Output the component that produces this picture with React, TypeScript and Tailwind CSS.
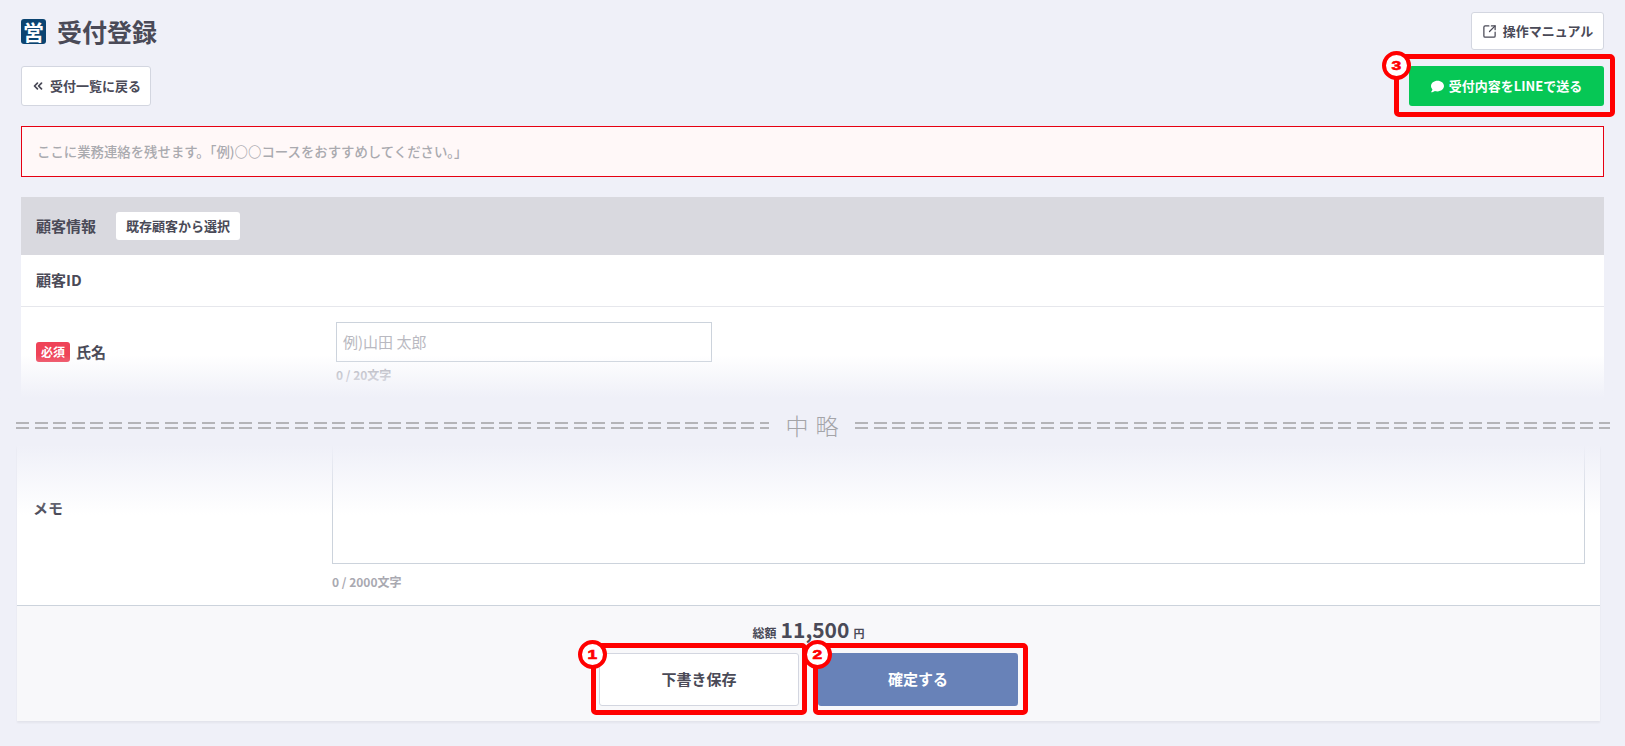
import { ReactNode } from 'react'
import { ChevronsLeft, SquareArrowOutUpRight } from 'lucide-react'
import { FaComment } from 'react-icons/fa'

const dashes = (count: number) =>
  Array.from({ length: count }, (_, i) => (
    <span key={i} className="h-[7px] w-[13px] shrink-0 border-y-2 border-[#b4b4b8]" />
  ))

const Callout = ({
  n,
  boxClass,
  badgeClass,
  children,
}: {
  n: string
  boxClass: string
  badgeClass: string
  children: ReactNode
}) => (
  <div className="relative">
    {children}
    <div className={`pointer-events-none absolute rounded-[5px] border-[5px] border-[#ff0000] ${boxClass}`} />
    <div
      className={`absolute flex h-[29px] w-[29px] items-center justify-center rounded-full border-[4px] border-[#ff0000] bg-white font-['Liberation_Sans',sans-serif] text-[12px] font-bold leading-none text-[#ff0000] ${badgeClass}`}
    >
      <span className="scale-x-[1.45] [-webkit-text-stroke:0.6px_#ff0000]">{n}</span>
    </div>
  </div>
)

export default function App() {
  return (
    <div className="h-[746px] overflow-hidden bg-[#eff0f8] font-['Noto_Sans_CJK_JP',sans-serif] text-[#4a4a57]">
      <div className="relative h-[405px] overflow-hidden px-[21px] pt-3">
        <div className="flex h-[38px] items-center justify-between">
          <div className="flex items-center gap-[11px]">
            <div className="flex h-[25px] w-[25px] items-center justify-center rounded-[3px] bg-[#0b4471] text-[21px] font-bold leading-none text-white">
              営
            </div>
            <h1 className="text-[25px] font-bold leading-none">受付登録</h1>
          </div>
          <button className="flex h-[38px] w-[133px] items-center justify-center gap-[6px] rounded-[3px] border border-[#d3d6e0] bg-white text-[13px] font-bold">
            <SquareArrowOutUpRight size={15} strokeWidth={2} />
            操作マニュアル
          </button>
        </div>

        <div className="mt-4 flex h-10 items-center justify-between">
          <button className="flex h-10 w-[130px] items-center justify-center gap-[5px] rounded-[3px] border border-[#d3d6e0] bg-white text-[13px] font-bold">
            <ChevronsLeft size={14} strokeWidth={3} />
            受付一覧に戻る
          </button>
          <Callout
            n="3"
            boxClass="-left-[15px] -right-[11px] -top-[12px] -bottom-[11px]"
            badgeClass="-left-[27px] -top-[15px]"
          >
            <button className="flex h-10 w-[195px] items-center justify-center gap-[5px] rounded-[3px] bg-[#06c755] text-[13px] font-bold text-white">
              <FaComment size={13} />
              受付内容をLINEで送る
            </button>
          </Callout>
        </div>

        <div className="mt-5 flex h-[51px] items-center border border-[#e60012] bg-[#fff8f8] px-[15px] text-[13.4px] font-medium text-[#aaaaaf]">
          <span>
            ここに業務連絡を残せます。｢例)<span className="font-light">〇〇</span>コースをおすすめしてください。｣
          </span>
        </div>

        <section className="mt-5 bg-white">
          <div className="flex h-[58px] items-center gap-5 bg-[#d9d9df] px-[15px]">
            <h2 className="text-[15px] font-bold">顧客情報</h2>
            <button className="flex h-7 items-center rounded-[3px] bg-white px-[10px] text-[13px] font-bold">
              既存顧客から選択
            </button>
          </div>
          <div className="flex h-[52px] items-center border-b border-[#e6e7ec] px-[15px] text-[15px] font-bold">
            顧客ID
          </div>
          <div className="grid grid-cols-[300px_1fr] px-[15px] pt-[15px]">
            <div className="flex h-[60px] items-center gap-[6px] text-[15px] font-bold">
              <span className="flex h-5 w-[34px] items-center justify-center rounded-[3px] bg-[#ef4358] text-[12px] font-bold leading-none text-white">
                必須
              </span>
              氏名
            </div>
            <div>
              <div className="flex h-10 w-[376px] items-center border border-[#ccd3dc] px-[6px] text-[15px] font-normal text-[#b9b9c1]">
                例)山田 太郎
              </div>
              <p className="mt-[5px] text-[12px] font-bold leading-4 text-[#a9a9b1]">0 / 20文字</p>
            </div>
          </div>
          <div className="h-[60px]" />
        </section>
        <div className="pointer-events-none absolute inset-x-0 bottom-0 h-[50px] bg-gradient-to-b from-[#eff0f800] to-[#eff0f8] to-85%" />
      </div>

      <div className="flex h-10 items-center justify-between overflow-hidden pl-4 pr-[15px]">
        <div className="flex w-[753px] gap-[5.6px] overflow-hidden">{dashes(41)}</div>
        <div className="flex gap-[7px] text-[23px] font-light leading-none text-[#a4a4a8]">
          <span>中</span>
          <span>略</span>
        </div>
        <div className="flex w-[755px] gap-[5.6px] overflow-hidden">{dashes(41)}</div>
      </div>

      <section className="relative ml-[17px] w-[1583px] bg-white shadow-[0_2px_2px_rgba(0,0,0,0.05)]">
        <div className="grid h-[160px] grid-cols-[299px_1fr] pl-4 pr-[15px]">
          <div className="flex h-[126px] items-center text-[15px] font-bold">メモ</div>
          <div>
            <div className="h-[119px] border border-t-0 border-[#ccd3dc]" />
            <p className="mt-[10px] text-[12px] font-bold leading-4 text-[#a9a9b1]">0 / 2000文字</p>
          </div>
        </div>
        <div className="flex h-[116px] flex-col items-center border-t border-[#ccd3dc] bg-[#f8f8fa] pt-[13px]">
          <div className="flex h-[26px] items-baseline gap-[4px] font-bold">
            <span className="text-[12px]">総額</span>
            <span className="text-[21px] leading-none">11,500</span>
            <span className="text-[11px]">円</span>
          </div>
          <div className="mt-[8px] flex gap-[19px]">
            <Callout
              n="1"
              boxClass="-left-[8px] -right-[8px] -top-[10px] -bottom-[9px]"
              badgeClass="-left-[21px] -top-[13px]"
            >
              <button className="h-[53px] w-[200px] rounded-[3px] border border-[#d3d6e0] bg-white text-[15px] font-bold">
                下書き保存
              </button>
            </Callout>
            <Callout
              n="2"
              boxClass="-left-[5px] -right-[10px] -top-[10px] -bottom-[9px]"
              badgeClass="-left-[15px] -top-[13px]"
            >
              <button className="h-[53px] w-[200px] rounded-[3px] bg-[#6882b8] text-[15px] font-bold text-white">
                確定する
              </button>
            </Callout>
          </div>
        </div>
        <div className="pointer-events-none absolute inset-x-0 top-0 h-[70px] bg-gradient-to-b from-[#eff0f8] to-[#eff0f800]" />
      </section>
    </div>
  )
}
